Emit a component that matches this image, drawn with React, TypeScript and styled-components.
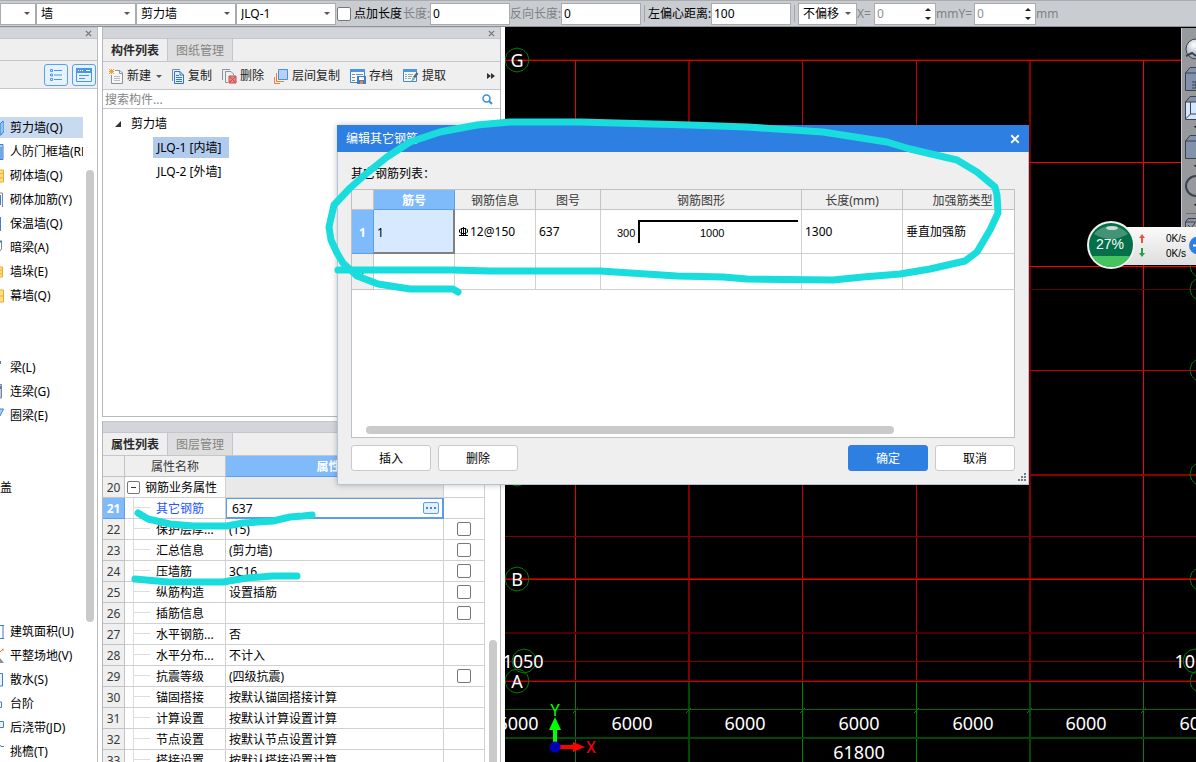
import React from "react";
import styled, { createGlobalStyle, css } from "styled-components";

const GlobalStyle = createGlobalStyle`
  * { box-sizing: border-box; }
  body {
    margin: 0;
    background: #fff;
    color: #000;
    font: 12px/16px "Noto Sans", "Noto Sans CJK SC", sans-serif;
  }
  button, input, select { font: inherit; color: inherit; margin: 0; }
`;

const line = "#c3c6cc";
const cellLine = "#d0d0d0";

const Shell = styled.div`
  position: relative;
  display: flex;
  flex-direction: column;
  height: 100vh;
  overflow: hidden;
`;

/* ---------- option bar ---------- */

const OptionBar = styled.header`
  flex: none;
  display: flex;
  align-items: center;
  height: 27px;
  background: #c9ccd1;
  border-top: 1px solid #aaacaf;
  border-bottom: 1px solid #8f9297;
  white-space: nowrap;
  overflow: hidden;
`;

const FieldBox = styled.span<{ $w: number }>`
  flex: none;
  display: flex;
  align-items: center;
  width: ${(p) => p.$w}px;
  height: 22px;
  background: #fff;
  border: 1px solid #a9abae;
`;

const BareSelect = styled.select`
  flex: 1;
  min-width: 0;
  height: 20px;
  padding: 0 0 0 4px;
  border: 0;
  background: transparent;
  appearance: none;
  outline: 0;
`;

const BareInput = styled.input<{ $dim?: boolean }>`
  flex: 1;
  min-width: 0;
  height: 20px;
  padding: 0 2px;
  border: 0;
  background: transparent;
  outline: 0;
  color: ${(p) => (p.$dim ? "#8f9193" : "#000")};
`;

const BarLabel = styled.label<{ $w: number; $dim?: boolean }>`
  flex: none;
  width: ${(p) => p.$w}px;
  color: ${(p) => (p.$dim ? "#808284" : "#000")};
`;

const BarSeparator = styled.span`
  flex: none;
  width: 1px;
  height: 17px;
  margin: 0 3px;
  background: #a2a5a9;
`;

const Tick = styled.input`
  appearance: none;
  display: block;
  width: 14px;
  height: 14px;
  background: #fff;
  border: 1px solid #777;
  border-radius: 2px;
`;

const BarTick = styled(Tick)`
  flex: none;
  margin: 0 3px 0 1px;
`;

const Steppers = styled.span`
  display: flex;
  flex-direction: column;
  gap: 6px;
  margin-right: 4px;
`;

const Caret = ({ up = false, color = "#555" }: { up?: boolean; color?: string }) => (
  <svg width="6" height="3" viewBox="0 0 6 3">
    <path d={up ? "M0 3L3 0L6 3z" : "M0 0H6L3 3z"} fill={color} />
  </svg>
);

const CaretSlot = styled.span`
  display: flex;
  margin-right: 5px;
`;

function Dropdown({ label, value, width }: { label: string; value: string; width: number }) {
  return (
    <FieldBox $w={width}>
      <BareSelect aria-label={label} defaultValue={value}>
        <option>{value}</option>
      </BareSelect>
      <CaretSlot>
        <Caret />
      </CaretSlot>
    </FieldBox>
  );
}

function Stepper({ id }: { id: string }) {
  return (
    <FieldBox $w={62}>
      <BareInput id={id} defaultValue="0" $dim />
      <Steppers>
        <Caret up color="#222" />
        <Caret color="#222" />
      </Steppers>
    </FieldBox>
  );
}

function TopOptions() {
  return (
    <OptionBar>
      <Dropdown label="楼层" value="" width={36} />
      <Dropdown label="构件大类" value="墙" width={100} />
      <Dropdown label="构件类型" value="剪力墙" width={100} />
      <Dropdown label="构件" value="JLQ-1" width={100} />
      <BarTick type="checkbox" id="extra" />
      <BarLabel htmlFor="extra" $w={49}>点加长度</BarLabel>
      <BarLabel htmlFor="len" $w={27} $dim>长度:</BarLabel>
      <FieldBox $w={80}><BareInput id="len" defaultValue="0" /></FieldBox>
      <BarLabel htmlFor="rev" $w={51} $dim>反向长度:</BarLabel>
      <FieldBox $w={80}><BareInput id="rev" defaultValue="0" /></FieldBox>
      <BarSeparator />
      <BarLabel htmlFor="offset" $w={63}>左偏心距离:</BarLabel>
      <FieldBox $w={80}><BareInput id="offset" defaultValue="100" /></FieldBox>
      <BarSeparator />
      <Dropdown label="偏移方式" value="不偏移" width={59} />
      <BarLabel htmlFor="dx" $w={17} $dim>X=</BarLabel>
      <Stepper id="dx" />
      <BarLabel htmlFor="dy" $w={38} $dim>mmY=</BarLabel>
      <Stepper id="dy" />
      <BarLabel htmlFor="dy" $w={24} $dim>mm</BarLabel>
    </OptionBar>
  );
}

/* ---------- shared panel parts ---------- */

const Workspace = styled.div`
  flex: 1;
  min-height: 0;
  display: flex;
`;

const PaneStrip = styled.div`
  flex: none;
  display: flex;
  justify-content: flex-end;
  align-items: center;
  height: 12px;
  padding-right: 5px;
  background: #d4d5da;
  border-top: 1px solid ${line};
  border-bottom: 1px solid ${line};
`;

const StripClose = styled.button`
  display: flex;
  padding: 0;
  border: 0;
  background: none;
`;

const Cross = ({ size, color }: { size: number; color: string }) => (
  <svg width={size} height={size} viewBox="0 0 8 8">
    <path d="M1 1L7 7M7 1L1 7" stroke={color} strokeWidth="1.5" />
  </svg>
);

const TabRow = styled.div`
  flex: none;
  display: flex;
  height: 23px;
  background: #efefef;
  border-bottom: 1px solid ${line};
`;

const Tab = styled.button<{ $on?: boolean }>`
  width: 65px;
  padding: 2px 0 0;
  border: 0;
  border-right: 1px solid ${line};
  background: ${(p) => (p.$on ? "#efefef" : "#dedede")};
  color: ${(p) => (p.$on ? "#2b2b2b" : "#858585")};
  font-weight: ${(p) => (p.$on ? 700 : 400)};
`;

const ScrollThumb = styled.div`
  flex: none;
  width: 8px;
  border-radius: 4px;
  background: #cacaca;
`;

/* ---------- component category list ---------- */

const NavPane = styled.aside`
  flex: none;
  display: flex;
  flex-direction: column;
  width: 98px;
  margin-right: 4px;
  border-right: 1px solid #b9bcc1;
  overflow: hidden;
`;

const NavBlank = styled.div`
  flex: none;
  height: 22px;
  background: #efefef;
  border-bottom: 1px solid ${line};
`;

const NavTools = styled.div`
  flex: none;
  display: flex;
  justify-content: flex-end;
  align-items: center;
  gap: 4px;
  height: 28px;
  padding-right: 1px;
  background: #efefef;
  border-bottom: 1px solid ${line};
`;

const NavToolButton = styled.button`
  display: flex;
  align-items: center;
  justify-content: center;
  width: 24px;
  height: 22px;
  padding: 0;
  background: #e6f2fe;
  border: 1px solid #54a2f2;
  border-radius: 3px;
`;

const NavBody = styled.div`
  flex: 1;
  min-height: 0;
  display: flex;
`;

const NavLists = styled.div`
  width: 83px;
  margin-right: 3px;
  padding-top: 26px;
  overflow: hidden;
`;

const NavGroup = styled.ul<{ $skip: number }>`
  margin: 0;
  padding: 0 0 ${(p) => p.$skip * 24}px;
  list-style: none;
`;

const NavItem = styled.li<{ $on?: boolean }>`
  display: flex;
  align-items: center;
  gap: 6px;
  height: 24px;
  white-space: nowrap;
  border: solid transparent;
  border-width: 2px 0 1px;
  background: ${(p) => (p.$on ? "#c8daf0" : "transparent")};
  background-clip: padding-box;
  svg { flex: none; }
`;

const NavThumb = styled(ScrollThumb)`
  height: 452px;
  margin-top: 81px;
`;

type Nav = [string, React.ReactNode];

const blue = "#3f7fd0";
const orange = "#f5a81c";
const navGroups: { skip: number; items: Nav[] }[] = [
  {
    skip: 2,
    items: [
      ["剪力墙(Q)", <path d="M0 4L3 1L4 3V11L1 15H0z" fill="#8fc2f5" stroke={blue} />],
      ["人防门框墙(RF)", <path d="M0 .5H3V15.500H0M1 3V15" fill="#a9cdf5" stroke={blue} />],
      ["砌体墙(Q)", <path d="M0 2H3.500V14H0M0 5.500H3.500M0 10H3.500" fill="#ffdf8c" stroke={orange} />],
      ["砌体加筋(Y)", <><path d="M0 1H2.500V15" fill="none" stroke="#7c8794" /><path d="M.5 3V13" stroke={blue} /></>],
      ["保温墙(Q)", <path d="M0 1V15" stroke={blue} strokeWidth="2" />],
      ["暗梁(A)", <><path d="M1.500 2V9L0 11" fill="none" stroke="#7c8794" /><path d="M0 1.500H2" stroke={blue} strokeWidth="2" /></>],
      ["墙垛(E)", <path d="M0 3H2.500V13H0M0 6H2.500M0 10H2.500" fill="#ffdf8c" stroke={orange} />],
      ["幕墙(Q)", <path d="M0 2H3.500V14H0M0 8H3.500" fill="#ffdf8c" stroke={orange} />],
    ],
  },
  {
    skip: 2,
    items: [
      ["梁(L)", <path d="M.5 1V4" stroke={blue} />],
      ["连梁(G)", <><path d="M0 .5H1.500V14H0" stroke="#7c8794" fill="#c7ccd2" /><path d="M0 2V5" stroke={blue} strokeWidth="2" /></>],
      ["圈梁(E)", <path d="M0 1H3.500L0 8" stroke={blue} fill="#a9cdf5" />],
    ],
  },
  { skip: 5, items: [["盖", null]] },
  {
    skip: 0,
    items: [
      ["建筑面积(U)", <path d="M0 1.500H4M0 14.500H4M3 1V15" stroke={blue} fill="none" />],
      ["平整场地(V)", <><path d="M0 4L3 1M3 .5V3" stroke="#ef8036" /><path d="M0 10L4 15H0z" fill="#8a8f96" /></>],
      ["散水(S)", <path d="M0 1.500H2.500V14H0" stroke={blue} fill="#e6f2fe" />],
      ["台阶", <path d="M0 6H1.500V11.500H0" stroke={blue} fill="none" />],
      ["后浇带(JD)", <path d="M0 1.500H3.500V7.500H0" stroke={blue} fill="#e6f2fe" />],
      ["挑檐(T)", <path d="M0 1L1 2.500H4" stroke={blue} fill="none" />],
    ],
  },
];

function Navigation() {
  return (
    <NavPane>
      <PaneStrip>
        <StripClose aria-label="关闭"><Cross size={7} color="#777" /></StripClose>
      </PaneStrip>
      <NavBlank />
      <NavTools>
        <NavToolButton aria-label="列表">
          <svg width="14" height="14" viewBox="0 0 14 14" fill="none" stroke="#4a96ea">
            <path d="M1.500 1.500h2v2h-2zM1.500 6h2v2h-2zM1.500 10.500h2v2h-2zM5 2.500h8M5 7h8M5 11.500h8" />
          </svg>
        </NavToolButton>
        <NavToolButton aria-label="视图">
          <svg width="16" height="14" viewBox="0 0 16 14">
            <path d="M.5 .5h15v13H.5z" fill="#e6f2fe" stroke="#4a96ea" />
            <path d="M0 0h16v5H0z" fill="#4a96ea" />
            <path d="M2 2.500h1M4 2.500h1M6 2.500h1M10 2.500h4" stroke="#fff" />
            <path d="M3 7.500h10M3 10.500h6" stroke="#4a96ea" />
          </svg>
        </NavToolButton>
      </NavTools>
      <NavBody>
        <NavLists>
          {navGroups.map((g, i) => (
            <NavGroup key={i} $skip={g.skip}>
              {g.items.map(([name, icon], k) => (
                <NavItem key={name} $on={i === 0 && k === 0}>
                  {icon && <svg width="4" height="16" viewBox="0 0 4 16">{icon}</svg>}
                  {name}
                </NavItem>
              ))}
            </NavGroup>
          ))}
        </NavLists>
        <NavThumb />
      </NavBody>
    </NavPane>
  );
}

/* ---------- component list panel ---------- */

const MiddleColumn = styled.div`
  flex: none;
  display: flex;
  flex-direction: column;
  gap: 4px;
  width: 399px;
  margin-right: 4px;
`;

const ListPane = styled.section`
  flex: none;
  display: flex;
  flex-direction: column;
  height: 390px;
  border: solid #b4b7bc;
  border-width: 0 1px 1px;
`;

const ToolRow = styled.div`
  flex: none;
  display: flex;
  align-items: center;
  gap: 10px;
  height: 28px;
  padding: 1px 5px 0 6px;
  background: #efefef;
  border-bottom: 1px solid ${line};
`;

const ToolButton = styled.button`
  display: flex;
  align-items: center;
  gap: 3px;
  padding: 0;
  border: 0;
  background: none;
  white-space: nowrap;
  color: #222;
`;

const MenuCaret = styled.span`
  display: flex;
  padding-left: 2px;
`;

const MoreButton = styled(ToolButton)`
  margin-left: auto;
`;

const SearchRow = styled.div`
  flex: none;
  display: flex;
  align-items: center;
  height: 19px;
  padding-right: 7px;
  border-bottom: 1px solid ${line};
  input::placeholder { color: #858585; opacity: 1; }
`;

const TreeRoot = styled.div`
  display: flex;
  align-items: center;
  gap: 10px;
  height: 24px;
  margin-top: 3px;
  padding-left: 12px;
`;

const TreeLeaf = styled.div<{ $on?: boolean }>`
  width: 76px;
  height: 21px;
  margin: 1px 0 2px 50px;
  padding-left: 4px;
  line-height: 21px;
  white-space: nowrap;
  background: ${(p) => (p.$on ? "#b0cbed" : "transparent")};
`;

const NewIcon = () => (
  <svg width="15" height="15" viewBox="0 0 15 15" fill="none">
    <path d="M2.500 6V14.500H13.500V4L11 1.500H6" fill="#f6f6f6" stroke="#8a929c" />
    <path d="M10.500 1.500V4.500H13.500" stroke="#8a929c" />
    <path d="M5 7.500h6M5 9.500h6M5 11.500h6" stroke="#b9bdc2" />
    <path d="M0 0h1v1h-1zM2 0h1v1h-1zM4 0h1v1h-1zM1 1h3v1h-3zM0 2h5v1h-5zM1 3h3v1h-3zM0 4h1v1h-1zM2 4h1v1h-1zM4 4h1v1h-1z" fill="#f0a030" />
  </svg>
);
const CopyIcon = () => (
  <svg width="13" height="15" viewBox="0 0 13 15" fill="none">
    <path d="M.5 12V.5H8" stroke="#7f8a97" />
    <path d="M2.500 2.500H8L11.500 6V14.500H2.500z" fill="#e3effc" stroke="#2f76cc" />
    <path d="M8 2.500V6H11.500M4 6.500h3M4 8.500h6M4 10.500h6M4 12.500h6" stroke="#2f76cc" />
  </svg>
);
const DeleteIcon = () => (
  <svg width="15" height="15" viewBox="0 0 15 15" fill="none">
    <path d="M.5 11V.5H8" stroke="#8a929c" />
    <path d="M6 13.500H3.500V2.500H9L11.500 5V6" stroke="#8a929c" />
    <path d="M7 7h7v7H7z" fill="#e08a8a" stroke="#c94a4a" />
    <path d="M8 8l5 5M13 8l-5 5" stroke="#c94a4a" />
  </svg>
);
const LayerIcon = () => (
  <svg width="15" height="15" viewBox="0 0 15 15" fill="none">
    <path d="M4.500 .5H13.500V10.500H4.500z" fill="#b3d3fb" stroke="#4b8fe0" />
    <path d="M2.500 4V12.500H10" stroke="#ef8036" />
    <path d="M.5 8V14.500H6" stroke="#ef8036" />
  </svg>
);
const ArchiveIcon = () => (
  <svg width="16" height="15" viewBox="0 0 16 15" fill="none">
    <path d="M.5 .5h14v13H.5z" fill="#f4f8fd" stroke="#4a82c8" />
    <path d="M0 0h15v3H0z" fill="#4a96ea" />
    <path d="M2 5.500h3M6 5.500h7M2 8.500h3M2 11.500h3" stroke="#7f8a97" />
    <path d="M7 7h9v8H7z" fill="#3f7fd0" />
    <path d="M9 8h5v3H9z" fill="#fff" />
    <path d="M10 12h3v3h-3z" fill="#ef8036" />
  </svg>
);
const ExtractIcon = () => (
  <svg width="16" height="14" viewBox="0 0 16 14" fill="none">
    <path d="M.5 .5h13v12H.5z" fill="#f4f8fd" stroke="#4a82c8" />
    <path d="M0 0h14v3H0z" fill="#4a96ea" />
    <path d="M2 5.500h2M5 5.500h5M2 7.500h2M5 7.500h4M2 9.500h2M5 9.500h3" stroke="#9aa2ac" />
    <path d="M8 13L10 8L12 10z" fill="#39b6c8" />
    <path d="M11 8.500L14.500 4" stroke="#666" strokeWidth="2.500" />
  </svg>
);

function ComponentList() {
  return (
    <ListPane>
      <PaneStrip>
        <StripClose aria-label="关闭"><Cross size={7} color="#777" /></StripClose>
      </PaneStrip>
      <TabRow>
        <Tab $on>构件列表</Tab>
        <Tab>图纸管理</Tab>
      </TabRow>
      <ToolRow>
        <ToolButton><NewIcon />新建<MenuCaret><Caret /></MenuCaret></ToolButton>
        <ToolButton><CopyIcon />复制</ToolButton>
        <ToolButton><DeleteIcon />删除</ToolButton>
        <ToolButton><LayerIcon />层间复制</ToolButton>
        <ToolButton><ArchiveIcon />存档</ToolButton>
        <ToolButton><ExtractIcon />提取</ToolButton>
        <MoreButton aria-label="更多">
          <svg width="8" height="6" viewBox="0 0 8 6"><path d="M0 0L4 3L0 6zM4 0L8 3L4 6z" fill="#333" /></svg>
        </MoreButton>
      </ToolRow>
      <SearchRow>
        <BareInput aria-label="搜索构件" placeholder="搜索构件..." />
        <svg width="11" height="11" viewBox="0 0 11 11" fill="none" stroke="#3d8fcb">
          <circle cx="4.500" cy="4.500" r="3.500" strokeWidth="1.500" />
          <path d="M7 7l3 3" strokeWidth="2" />
        </svg>
      </SearchRow>
      <TreeRoot>
        <svg width="6" height="6" viewBox="0 0 6 6"><path d="M6 0V6H0z" fill="#333" /></svg>
        剪力墙
      </TreeRoot>
      <TreeLeaf $on>JLQ-1 [内墙]</TreeLeaf>
      <TreeLeaf>JLQ-2 [外墙]</TreeLeaf>
    </ListPane>
  );
}

/* ---------- property panel ---------- */

const PropPane = styled.section`
  flex: 1;
  min-height: 0;
  display: flex;
  flex-direction: column;
  overflow: hidden;
  border: solid #b4b7bc;
  border-width: 0 1px;
`;

const PropBody = styled.div`
  flex: 1;
  min-height: 0;
  display: flex;
  justify-content: space-between;
  padding-right: 3px;
`;

const PropThumb = styled(ScrollThumb)`
  margin-top: 184px;
  border-radius: 4px 4px 0 0;
`;

const HeadCell = styled.th<{ $on?: boolean }>`
  background: ${(p) => (p.$on ? "#7fbafb" : "#efefef")};
  color: ${(p) => (p.$on ? "#fff" : "#3a3a3a")};
  && {
    padding-top: 2px;
    font-weight: ${(p) => (p.$on ? 700 : 400)};
    border-color: ${(p) => (p.$on ? "#5f9fe8" : "#c3c3c3")};
  }
`;

const PropTable = styled.table`
  flex: none;
  width: 382px;
  height: max-content;
  table-layout: fixed;
  border-spacing: 0;
  th, td {
    height: 21px;
    padding: 0;
    border-right: 1px solid ${cellLine};
    border-bottom: 1px solid ${cellLine};
    font-weight: 400;
    line-height: 18px;
    white-space: nowrap;
    overflow: hidden;
  }
`;

const NameCell = styled.td<{ $on?: boolean }>`
  color: ${(p) => (p.$on ? "#1a56ff" : "#000")};
`;

const NameWrap = styled.div<{ $group?: boolean }>`
  display: flex;
  align-items: center;
  gap: ${(p) => (p.$group ? 5 : 6)}px;
  height: 20px;
  padding-left: ${(p) => (p.$group ? 2 : 8)}px;
`;

const NameText = styled.span`
  padding-top: 2px;
`;

const Branch = styled.span`
  flex: none;
  width: 17px;
  height: 20px;
  border-left: 1px solid #ddd;
  background: linear-gradient(#ddd, #ddd) 0 9px / 17px 1px no-repeat;
`;

const FoldButton = styled.button`
  display: flex;
  align-items: center;
  justify-content: center;
  width: 13px;
  height: 13px;
  padding: 0;
  border: 1px solid #777;
  border-radius: 2px;
  background: #fff;
`;

const ValueCell = styled.td<{ $group?: boolean }>`
  background: ${(p) => (p.$group ? "#e9e9e9" : "#fff")};
  && { padding: 2px 0 0 3px; }
`;

const EditCell = styled.td`
  && { border-right-color: #5c9ee6; border-bottom-color: #5c9ee6; }
`;

const EditBox = styled.div`
  display: flex;
  align-items: center;
  height: 20px;
  padding: 0 3px;
  border: 1px solid #5c9ee6;
  input { height: 18px; padding-top: 1px; }
`;

const MoreDots = styled.button`
  display: flex;
  align-items: center;
  justify-content: center;
  width: 16px;
  height: 12px;
  padding: 0;
  border: 1px solid #5c9ee6;
  border-radius: 2px;
  background: #e3f0fe;
`;

const TickCell = styled.td`
  ${Tick} { margin: 0 auto; }
`;

type Prop = { name: string; value: string; tick?: boolean; kind?: "group" | "edit" };
const properties: Prop[] = [
  { name: "钢筋业务属性", value: "", kind: "group" },
  { name: "其它钢筋", value: "637", kind: "edit" },
  { name: "保护层厚...", value: "(15)", tick: true },
  { name: "汇总信息", value: "(剪力墙)", tick: true },
  { name: "压墙筋", value: "3C16", tick: true },
  { name: "纵筋构造", value: "设置插筋", tick: true },
  { name: "插筋信息", value: "", tick: true },
  { name: "水平钢筋...", value: "否" },
  { name: "水平分布...", value: "不计入" },
  { name: "抗震等级", value: "(四级抗震)", tick: true },
  { name: "锚固搭接", value: "按默认锚固搭接计算" },
  { name: "计算设置", value: "按默认计算设置计算" },
  { name: "节点设置", value: "按默认节点设置计算" },
  { name: "搭接设置", value: "按默认搭接设置计算" },
];

function PropertyList() {
  return (
    <PropPane>
      <PaneStrip />
      <TabRow>
        <Tab $on>属性列表</Tab>
        <Tab>图层管理</Tab>
      </TabRow>
      <PropBody>
        <PropTable>
          <colgroup>
            <col width="22" /><col width="101" /><col width="218" /><col width="41" />
          </colgroup>
          <thead>
            <tr>
              <HeadCell />
              <HeadCell>属性名称</HeadCell>
              <HeadCell $on>属性值</HeadCell>
              <HeadCell />
            </tr>
          </thead>
          <tbody>
            {properties.map((p, i) => (
              <tr key={p.name}>
                <HeadCell $on={p.kind === "edit"}>{20 + i}</HeadCell>
                <NameCell $on={p.kind === "edit"}>
                  <NameWrap $group={p.kind === "group"}>
                    {p.kind === "group" ? (
                      <FoldButton aria-label="折叠">
                        <svg width="5" height="1"><path d="M0 .5H5" stroke="#333" /></svg>
                      </FoldButton>
                    ) : (
                      <Branch />
                    )}
                    <NameText>{p.name}</NameText>
                  </NameWrap>
                </NameCell>
                {p.kind === "edit" ? (
                  <EditCell>
                    <EditBox>
                      <BareInput aria-label={p.name} defaultValue={p.value} />
                      <MoreDots aria-label="编辑">
                        <svg width="10" height="2"><path d="M0 1h2M4 1h2M8 1h2" stroke="#3f86dc" strokeWidth="2" /></svg>
                      </MoreDots>
                    </EditBox>
                  </EditCell>
                ) : (
                  <ValueCell $group={p.kind === "group"}>{p.value}</ValueCell>
                )}
                <TickCell>{p.tick && <Tick type="checkbox" aria-label={p.name} />}</TickCell>
              </tr>
            ))}
          </tbody>
        </PropTable>
        <PropThumb />
      </PropBody>
    </PropPane>
  );
}

/* ---------- drawing area ---------- */

const Canvas = styled.main`
  position: relative;
  flex: 1;
  min-width: 0;
  background: #000;
  overflow: hidden;
`;

const Plan = styled.svg`
  display: block;
  width: 100%;
  height: 100%;
`;

const columnAxes: [number, string, number][] = [
  [575, "#f00000", 1],
  [688, "#800000", 2],
  [802, "#c80000", 1],
  [916, "#c80000", 1],
  [1029, "#800000", 2],
  [1143, "#ff0000", 1],
];
const rowAxes: [number, string, number][] = [
  [60, "#d80000", 1],
  [162, "#ff0000", 1],
  [266, "#ff0000", 1],
  [289, "#580000", 1],
  [370, "#c80000", 1],
  [474, "#8c0000", 2],
  [536, "#800000", 1],
  [579, "#e00000", 1],
  [632, "#480000", 2],
  [661, "#800000", 1],
  [681, "#d00000", 1],
];

const Bubble = ({ x, y }: { x: number; y: number }) => (
  <polygon
    fill="none"
    stroke="#008000"
    points={Array.from({ length: 12 }, (_, i) => {
      const a = (i * Math.PI) / 6;
      return `${(x + 12 * Math.cos(a)).toFixed(1)},${(y + 12 * Math.sin(a)).toFixed(1)}`;
    }).join(" ")}
  />
);

function Drawing() {
  return (
    <Plan>
      <g transform="translate(-505 -27)" fontSize="18" fill="#fff" textAnchor="middle">
        {columnAxes.map(([x, c, w]) => (
          <g key={x}>
            <rect x={x} y={60} width={w} height={622} fill={c} />
            <rect x={x} y={682} width={w} height={1000} fill={w > 1 ? "#004a00" : "#008000"} />
            <path d={`M${x - 2} 713L${x + 3} 708`} stroke="#008000" />
          </g>
        ))}
        {rowAxes.map(([y, c, w]) => (
          <rect key={y} x={505} y={y} width={3000} height={w} fill={c} />
        ))}
        <rect x={505} y={59} width={3000} height={1} fill="#500000" />
        <rect x={505} y={578} width={3000} height={1} fill="#800000" />
        <rect x={505} y={680} width={3000} height={1} fill="#500000" />
        <rect x={505} y={709} width={3000} height={1} fill="#006a00" />
        <rect x={505} y={737} width={3000} height={2} fill="#004a00" />
        {[60, 474, 579, 681].map((y) => <Bubble key={y} x={517} y={y} />)}
        <Bubble x={524} y={661} />
        {[266, 289, 370, 474, 579, 681].map((y) => <Bubble key={y} x={1202} y={y} />)}
        <Bubble x={1195} y={661} />
        <text x="517" y="67">G</text>
        <text x="517" y="586">B</text>
        <text x="517" y="688">A</text>
        <text x="523" y="668">1050</text>
        <text x="1195" y="668">1050</text>
        {[518, 632, 745, 859, 973, 1086, 1200].map((x) => (
          <text key={x} x={x} y="730">6000</text>
        ))}
        <text x="859" y="759">61800</text>
        <path d="M555 742V728" stroke="#00ff00" strokeWidth="4" />
        <path d="M549 730H561L555 717z" fill="#00ff00" />
        <path d="M560 747H574" stroke="#ff0000" strokeWidth="4" />
        <path d="M573 742V752L585 747z" fill="#ff0000" />
        <circle cx="555" cy="747" r="5.500" fill="#0000b8" />
        <g fontSize="16" fontFamily="Roboto, sans-serif">
          <text x="555" y="716" fill="#00ff00">Y</text>
          <text x="591" y="753" fill="#ff0000">X</text>
        </g>
      </g>
    </Plan>
  );
}

const ViewTools = styled.div`
  position: absolute;
  top: 1px;
  right: 0;
  width: 15px;
  height: 236px;
  background: #97999d;
  border-left: 1px solid #c6c8cb;
  overflow: hidden;
  svg { display: block; }
`;

const ViewToolStrip = () => (
  <ViewTools>
    <svg width="14" height="236" viewBox="0 0 14 236" fill="none" stroke="#3c4350">
      <defs>
        <radialGradient id="ball" cx=".4" cy=".3" r=".8">
          <stop offset="0" stopColor="#fff" /><stop offset="1" stopColor="#7f90a6" />
        </radialGradient>
      </defs>
      <circle cx="14" cy="21" r="10" fill="url(#ball)" />
      <path d="M4 28L10 25L14 28" strokeWidth="2" />
      <path d="M3.500 45L8 39.500H16V45M3.500 45H16V62.500H3.500z" fill="#8391aa" />
      <path d="M10 54h4v6h-4M10 57h4" />
      <path d="M3.500 74L8 68.500H16V74" fill="#8391aa" />
      <path d="M3.500 74H16V91.500H3.500z" fill="#d4e6fb" />
      <path d="M8.500 74V86L3.500 91M8.500 86H16" />
      <path d="M12 98h4l-3 2z" fill="#222" stroke="none" />
      <path d="M3.500 113L8 107.500H16V113M3.500 113H16V130.500H3.500z" fill="#8391aa" />
      <path d="M12 137h4l-3 2z" fill="#222" stroke="none" />
      <circle cx="14" cy="158" r="10" strokeWidth="2" />
      <path d="M12 176h4l-3 2z" fill="#222" stroke="none" />
      <path d="M4 185.500H14" stroke="#6b6e74" />
      <path d="M3.500 194L6 190.500H16M3.500 194H16M3.500 194V210" fill="#8391aa" />
      <path d="M6 197l3 3 4-5" />
    </svg>
  </ViewTools>
);

const SpeedMeter = styled.div`
  position: absolute;
  top: 200px;
  right: 0;
  display: flex;
  align-items: center;
  gap: 20px;
  width: 85px;
  height: 38px;
  padding: 0 0 0 27px;
  background: linear-gradient(#fafafa, #dedede);
  font: 10px/15px "Liberation Sans", sans-serif;
  white-space: nowrap;
`;

const SpeedBall = styled.svg`
  position: absolute;
  left: -25px;
  top: -7px;
`;

const SpeedPlus = styled.svg`
  position: absolute;
  right: 0;
  top: 9px;
`;

const SpeedWidget = () => (
  <SpeedMeter>
    <SpeedBall width="50" height="50" viewBox="0 0 50 50">
      <circle cx="25" cy="25" r="24" fill="#f2f2f2" />
      <circle cx="25" cy="25" r="22" fill="#04704a" />
      <path d="M6 36H44A22 22 0 0 1 6 36z" fill="#43c45e" />
      <path d="M8 14A22 22 0 0 1 42 14Q25 24 8 14z" fill="#fff" opacity=".25" />
      <ellipse cx="26" cy="8" rx="6" ry="2" fill="#fff" opacity=".7" />
      <text x="24" y="29" textAnchor="middle" fill="#fff" fontSize="14" fontFamily="Liberation Sans">27%</text>
    </SpeedBall>
    <svg width="8" height="24" viewBox="0 0 8 24">
      <path d="M4 0L7 4H5V9H3V4H1z" fill="#e8543c" />
      <path d="M4 23L7 19H5V14H3V19H1z" fill="#2a9c4e" />
    </svg>
    <span>0K/s<br />0K/s</span>
    <SpeedPlus width="7" height="19" viewBox="0 0 7 19">
      <circle cx="9" cy="9.500" r="9" fill="#2f7fe0" />
      <path d="M4 9.500H7" stroke="#fff" strokeWidth="2" />
    </SpeedPlus>
  </SpeedMeter>
);

/* ---------- dialog ---------- */

const Dialog = styled.section`
  position: absolute;
  left: 337px;
  top: 125px;
  display: flex;
  flex-direction: column;
  width: 692px;
  background: #efefef;
  box-shadow: 0 0 6px rgba(0, 0, 0, 0.25);
`;

const DialogTitle = styled.div`
  display: flex;
  align-items: center;
  justify-content: space-between;
  height: 27px;
  padding: 0 9px;
  background: #2d80e2;
  color: #fff;
`;

const DialogClose = styled.button`
  display: flex;
  padding: 0;
  border: 0;
  background: none;
`;

const DialogBody = styled.div`
  position: relative;
  padding: 14px 13px 13px;
  border: solid #b5c3d9;
  border-width: 0 1px 1px;
`;

const GridTitle = styled.div`
  margin-bottom: 7px;
`;

const GridFrame = styled.div`
  display: flex;
  flex-direction: column;
  justify-content: space-between;
  height: 249px;
  padding-bottom: 3px;
  background: #fff;
  border: 1px solid #c0c0c0;
  overflow: hidden;
`;

const RebarTable = styled.table`
  width: 671px;
  table-layout: fixed;
  border-spacing: 0;
  th, td {
    padding: 0;
    border-right: 1px solid ${cellLine};
    border-bottom: 1px solid ${cellLine};
    line-height: 17px;
    white-space: nowrap;
  }
  td { padding-left: 3px; }
  thead th { height: 20px; }
`;

const RebarRow = styled.tr<{ $h: number }>`
  th, td { height: ${(p) => p.$h}px; }
`;

const CurrentCell = styled.td`
  background: #d6e9fe;
  && {
    padding-top: 2px;
    border-right: 2px solid #808080;
    border-bottom: 2px solid #808080;
  }
`;

const ShapeCell = styled.td`
  && { padding: 0; }
  svg { display: block; }
`;

const InlineMark = styled.span`
  display: flex;
  align-items: center;
  padding-left: 1px;
  gap: 1px;
`;

const GridThumb = styled.div`
  flex: none;
  width: 528px;
  height: 8px;
  margin-left: 14px;
  border-radius: 4px;
  background: #cacaca;
`;

const ButtonRow = styled.div`
  display: flex;
  gap: 7px;
  margin-top: 7px;
`;

const PushButton = styled.button<{ $primary?: boolean }>`
  width: 80px;
  height: 26px;
  padding: 2px 0 0;
  border: 1px solid #c9c9c9;
  border-radius: 3px;
  background: #fff;
  ${(p) =>
    p.$primary &&
    css`
      margin-left: auto;
      border-color: #2d80e2;
      background: #2d80e2;
      color: #fff;
    `}
`;

const Grip = styled.svg`
  position: absolute;
  right: 2px;
  bottom: 3px;
`;

function RebarDialog() {
  return (
    <Dialog role="dialog" aria-label="编辑其它钢筋">
      <DialogTitle>
        编辑其它钢筋
        <DialogClose aria-label="关闭"><Cross size={10} color="#fff" /></DialogClose>
      </DialogTitle>
      <DialogBody>
        <GridTitle>其它钢筋列表：</GridTitle>
        <GridFrame>
          <RebarTable>
            <colgroup>
              <col width="22" /><col width="81" /><col width="81" /><col width="65" />
              <col width="201" /><col width="101" /><col width="120" />
            </colgroup>
            <thead>
              <tr>
                <HeadCell />
                <HeadCell $on>筋号</HeadCell>
                <HeadCell>钢筋信息</HeadCell>
                <HeadCell>图号</HeadCell>
                <HeadCell>钢筋图形</HeadCell>
                <HeadCell>长度(mm)</HeadCell>
                <HeadCell>加强筋类型</HeadCell>
              </tr>
            </thead>
            <tbody>
              <RebarRow $h={44}>
                <HeadCell $on>1</HeadCell>
                <CurrentCell>1</CurrentCell>
                <td>
                  <InlineMark>
                    <svg width="10" height="10" viewBox="0 0 10 10" fill="none" stroke="#000">
                      <path d="M4.500 0V9M2 1.500h5l1.500 1.500v2l-1.500 1.500h-5l-1.500-1.500v-2zM2.500 1V9M6.500 1V9M0 8.500H9" />
                    </svg>
                    12@150
                  </InlineMark>
                </td>
                <td>637</td>
                <ShapeCell>
                  <svg width="200" height="43" viewBox="0 0 200 43" fontSize="11" fontFamily="Liberation Sans">
                    <path d="M38 33V11H197" fill="none" stroke="#000" strokeWidth="2" />
                    <text x="16" y="27">300</text>
                    <text x="99" y="27">1000</text>
                  </svg>
                </ShapeCell>
                <td>1300</td>
                <td>垂直加强筋</td>
              </RebarRow>
              <RebarRow $h={36}>
                <HeadCell>2</HeadCell>
                <td /><td /><td /><td /><td /><td />
              </RebarRow>
            </tbody>
          </RebarTable>
          <GridThumb />
        </GridFrame>
        <ButtonRow>
          <PushButton>插入</PushButton>
          <PushButton>删除</PushButton>
          <PushButton $primary>确定</PushButton>
          <PushButton>取消</PushButton>
        </ButtonRow>
        <Grip width="8" height="8" viewBox="0 0 8 8" fill="#777b84">
          <path d="M6 0h2v2H6zM3 3h2v2H3zM6 3h2v2H6zM0 6h2v2H0zM3 6h2v2H3zM6 6h2v2H6z" />
        </Grip>
      </DialogBody>
    </Dialog>
  );
}

/* ---------- hand-drawn marks ---------- */

const MarkLayer = styled.svg`
  position: absolute;
  inset: 0;
  width: 100%;
  height: 100%;
  pointer-events: none;
`;

const Marks = () => (
  <MarkLayer fill="none" stroke="#19dddd" strokeWidth="7" strokeLinecap="round" strokeLinejoin="round">
    <path d="M458 292L453 289L410 289L378 284L357 276L343 263L337 253L331 240L329 227L334 205L350 188L367 173L387 157L410 142L440 132L477 125L510 122L580 122L690 125L747 127L823 132L887 142L910 149L957 160L977 172L995 187L997 195L998 213L990 230L977 252L965 261L930 269L900 274L863 277L833 280L747 279L723 277L677 276L600 271L490 271L453 270L338 270" />
    <path d="M138 513L148 519L170 524L193 526L227 526L243 523L273 521L290 517L303 516L312 515" />
    <path d="M135 579L168 582L223 582L247 578L273 576L297 576" />
  </MarkLayer>
);

export default function App() {
  return (
    <Shell>
      <GlobalStyle />
      <TopOptions />
      <Workspace>
        <Navigation />
        <MiddleColumn>
          <ComponentList />
          <PropertyList />
        </MiddleColumn>
        <Canvas>
          <Drawing />
          <ViewToolStrip />
          <SpeedWidget />
        </Canvas>
      </Workspace>
      <RebarDialog />
      <Marks />
    </Shell>
  );
}
